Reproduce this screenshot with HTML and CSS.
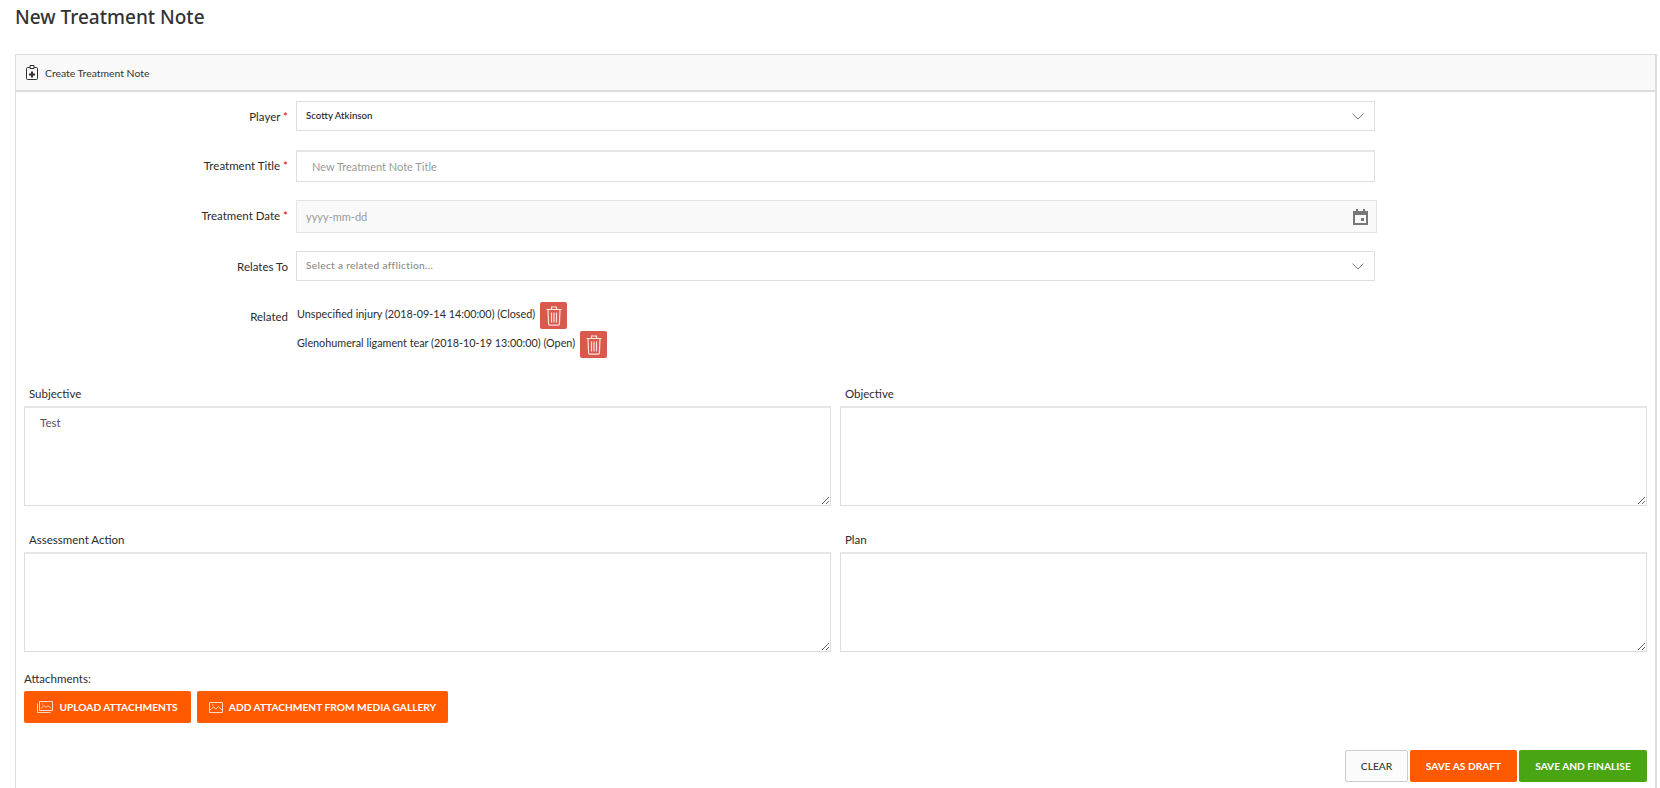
FILE: index.html
```html
<!DOCTYPE html>
<html lang="en">
<head>
<meta charset="utf-8">
<title>New Treatment Note</title>
<link rel="stylesheet" href="styles.css">
</head>
<body>
<h1 class="page-title">New Treatment Note</h1>
<section class="panel">
  <header class="panel-head">
    <svg class="clip" viewBox="0 0 12 15" width="12" height="15"><path d="M1.500 2.500h9a1 1 0 0 1 1 1v10a1 1 0 0 1-1 1h-9a1 1 0 0 1-1-1v-10a1 1 0 0 1 1-1z" fill="none" stroke="#333" stroke-width="1"/><path d="M4 .500h4v3H4z" fill="#fff" stroke="#333"/><path d="M5 6.500h2v2h2v2H7v2H5v-2H3v-2h2z" fill="#333"/></svg>
    <span>Create Treatment Note</span>
  </header>
  <div class="panel-body">
    <div class="form-row row-player">
      <label class="lbl">Player <em>*</em></label>
      <div class="select"><span class="sel-value">Scotty Atkinson</span><svg class="chev" viewBox="0 0 12 7" width="12" height="7"><path d="M.5.700 6 6 11.500.700" fill="none" stroke="#777" stroke-width="1"/></svg></div>
    </div>
    <div class="form-row row-title">
      <label class="lbl">Treatment Title <em>*</em></label>
      <div class="input"><span class="ph">New Treatment Note Title</span></div>
    </div>
    <div class="form-row row-date">
      <label class="lbl">Treatment Date <em>*</em></label>
      <div class="date"><span class="ph">yyyy-mm-dd</span><svg class="cal" viewBox="0 0 15 16" width="15" height="16"><path d="M3 0h2v2h5V0h2v2h3v14H0V2h3z M2 6v8h11V6z" fill="#777" fill-rule="evenodd"/><rect x="8" y="9" width="3" height="3" fill="#777"/></svg></div>
    </div>
    <div class="form-row row-rel">
      <label class="lbl">Relates To</label>
      <div class="select"><span class="sel-ph">Select a related affliction...</span><svg class="chev" viewBox="0 0 12 7" width="12" height="7"><path d="M.5.700 6 6 11.500.700" fill="none" stroke="#777" stroke-width="1"/></svg></div>
    </div>
    <div class="form-row row-related">
      <label class="lbl lbl-related">Related</label>
      <div class="related-list">
        <div class="rel-item"><span>Unspecified injury (2018-09-14 14:00:00) (Closed)</span><button class="trash"><svg viewBox="0 0 16 20" width="16" height="20"><path d="M.500 3.500h15M5.500 3.500V1h5v2.500M2 3.500l.6 14.500a1.200 1.200 0 0 0 1.200 1.200h8.400a1.200 1.200 0 0 0 1.200-1.200L14 3.500M5.500 6.500v10M8 6.500v10M10.500 6.500v10" fill="none" stroke="#fbe3df" stroke-width="1.200"/></svg></button></div>
        <div class="rel-item"><span>Glenohumeral ligament tear (2018-10-19 13:00:00) (Open)</span><button class="trash"><svg viewBox="0 0 16 20" width="16" height="20"><path d="M.500 3.500h15M5.500 3.500V1h5v2.500M2 3.500l.6 14.500a1.200 1.200 0 0 0 1.200 1.200h8.400a1.200 1.200 0 0 0 1.200-1.200L14 3.500M5.500 6.500v10M8 6.500v10M10.500 6.500v10" fill="none" stroke="#fbe3df" stroke-width="1.200"/></svg></button></div>
      </div>
    </div>
    <div class="notes">
      <div class="note"><label>Subjective</label><textarea class="ta">Test</textarea></div>
      <div class="note"><label>Objective</label><textarea class="ta"></textarea></div>
      <div class="note"><label>Assessment Action</label><textarea class="ta"></textarea></div>
      <div class="note"><label>Plan</label><textarea class="ta"></textarea></div>
    </div>
    <div class="attach">
      <div class="attach-label">Attachments:</div>
      <div class="attach-btns">
        <button class="btn orange"><svg viewBox="0 0 16 12" width="16" height="12"><path d="M2.500.500h13v9h-13z M.500 2.500v9h13M4 7.500l3-3 2 2 2-2 3 3M5 3h1" fill="none" stroke="#ffd9c4" stroke-width="1"/></svg>UPLOAD ATTACHMENTS</button>
        <button class="btn orange"><svg viewBox="0 0 14 11" width="14" height="11"><path d="M.500.500h13v10H.500zM1 8l3.500-3 2.500 2 2.500-2.500L13 8M3 3h1.500" fill="none" stroke="#ffd9c4" stroke-width="1"/></svg>ADD ATTACHMENT FROM MEDIA GALLERY</button>
      </div>
    </div>
    <div class="actions">
      <button class="btn clear">CLEAR</button>
      <button class="btn orange draft">SAVE AS DRAFT</button>
      <button class="btn green">SAVE AND FINALISE</button>
    </div>
  </div>
</section>
</body>
</html>
```
FILE: styles.css
```css
* { box-sizing: border-box; }
html, body { height: 100%; overflow: hidden; }
body {
  margin: 0;
  padding: 0 0 0 15px;
  background: #fff;
  color: #2b2b2b;
  font-family: Lato, "Liberation Sans", sans-serif;
  font-size: 11.5px;
}
.page-title {
  margin: 0;
  height: 54px;
  padding-top: 4px;
  font-family: "Noto Sans", "Liberation Sans", sans-serif;
  font-size: 19px;
  line-height: 26px;
  font-weight: 500;
  color: #333;
}
.panel {
  width: 1642px;
  height: 740px;
  border: 1px solid #ddd;
  border-bottom: 0;
  border-right-width: 2px;
}
.panel-head {
  height: 37px;
  background: #f9f9f9;
  border-bottom: 2px solid #ddd;
  display: flex;
  align-items: center;
  padding-left: 10px;
  gap: 7px;
  font-size: 10.4px;
  color: #333;
}
.panel-body { padding: 9px 8px 0; }
.form-row { display: flex; align-items: flex-start; }
.lbl {
  width: 264px;
  margin-right: 8px;
  flex: none;
  text-align: right;
  line-height: 30px;
  padding-top: 1px;
}
.lbl-related { padding-top: 0; }
.lbl em { color: #d00; font-style: normal; }
.select, .input {
  width: 1079px;
  height: 30px;
  border: 1px solid #ddd;
  display: flex;
  align-items: center;
  justify-content: space-between;
  padding: 0 9px;
  background: #fff;
}
.sel-value { font-size: 9.7px; font-weight: 500; color: #222; position: relative; top: -1px; }
.sel-ph { font-size: 10.2px; font-weight: 500; letter-spacing: .3px; color: #888; position: relative; top: -1px; }
.chev { margin-right: 1px; }
.input { height: 32px; padding-left: 15px; border-top: 2px solid #e6e6e6; }
.ph { color: #999; font-size: 11px; }
.date {
  width: 1081px;
  height: 33px;
  border: 1px solid #e4e4e4;
  background: #f9f9f9;
  display: flex;
  align-items: center;
  justify-content: space-between;
  padding: 0 8px 0 9px;
}
.row-player { height: 49px; }
.row-title { height: 50px; }
.row-date { height: 51px; }
.row-rel { height: 51px; }
.row-related { height: 81px; }
.related-list { display: flex; flex-direction: column; gap: 2px; padding-left: 1px; }
.rel-item { display: flex; align-items: flex-start; gap: 5px; height: 27px; line-height: 24px; font-size: 10.8px; }
.trash {
  width: 27px;
  height: 27px;
  padding: 0;
  border: 0;
  border-radius: 2px;
  background: #d9594c;
  display: flex;
  align-items: center;
  justify-content: center;
}
.notes {
  display: grid;
  grid-template-columns: 807px 807px;
  column-gap: 9px;
  row-gap: 23px;
}
.note label { display: block; height: 23px; padding-left: 5px; line-height: 22px; }
.ta {
  display: block;
  width: 100%;
  height: 100px;
  border: 1px solid #ddd;
  border-top: 2px solid #e6e6e6;
  padding: 8px 15px;
  margin: 0;
  font: inherit;
  color: #555;
  background: #fff;
  resize: both;
  outline: none;
}
.attach { padding-top: 18px; }
.attach-label { height: 21px; line-height: 18px; }
.attach-btns { display: flex; gap: 6px; }
.btn {
  font-family: inherit;
  font-size: 10.2px;
  font-weight: 700;
  border: 0;
  border-radius: 2px;
  height: 32px;
  padding: 0;
  color: #fff;
  display: flex;
  align-items: center;
  justify-content: center;
  gap: 6px;
}
.orange { background: #ff5a00; }
.attach-btns .btn:first-child { width: 167px; }
.attach-btns .btn:last-child { width: 251px; }
.actions { display: flex; justify-content: flex-end; gap: 2px; margin-top: 27px; width: 1623px; }
.clear { width: 63px; background: #fbfbfb; border: 1px solid #ccc; color: #333; font-weight: 500; }
.draft { width: 107px; }
.green { width: 128px; background: #4aa513; }
```
